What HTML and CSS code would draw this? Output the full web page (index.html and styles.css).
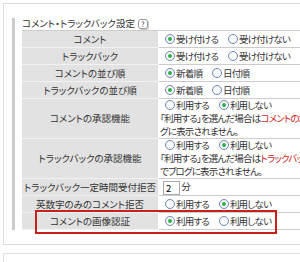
FILE: index.html
```html
<!DOCTYPE html>
<html lang="ja">
<head>
    <meta charset="UTF-8">
    <title>コメント・トラックバック設定</title>
    <link rel="stylesheet" href="styles.css">
</head>
<body>
    <div class="panel">
        <div class="section">
            <div class="section-title">コメント・トラックバック設定 <span class="help">?</span></div>
            <table class="settings">
                <tr>
                    <th>コメント</th>
                    <td><span class="radio on"></span>受け付ける<span class="radio"></span>受け付けない</td>
                </tr>
                <tr>
                    <th>トラックバック</th>
                    <td><span class="radio on"></span>受け付ける<span class="radio"></span>受け付けない</td>
                </tr>
                <tr>
                    <th>コメントの並び順</th>
                    <td><span class="radio on"></span>新着順<span class="radio"></span>日付順</td>
                </tr>
                <tr>
                    <th>トラックバックの並び順</th>
                    <td><span class="radio on"></span>新着順<span class="radio"></span>日付順</td>
                </tr>
                <tr class="tall">
                    <th>コメントの承認機能</th>
                    <td>
                        <span class="radio"></span>利用する<span class="radio on"></span>利用しない<br>
                        「利用する」を選んだ場合は<span class="warn">コメントの承認</span>を行うまでブロ<br>グに表示されません。
                    </td>
                </tr>
                <tr class="tall">
                    <th>トラックバックの承認機能</th>
                    <td>
                        <span class="radio"></span>利用する<span class="radio on"></span>利用しない<br>
                        「利用する」を選んだ場合は<span class="warn">トラックバックの承認</span>を行うま<br>でブログに表示されません。
                    </td>
                </tr>
                <tr>
                    <th>トラックバック一定時間受付拒否</th>
                    <td><input class="minutes" type="text" value="2"> 分</td>
                </tr>
                <tr>
                    <th>英数字のみのコメント拒否</th>
                    <td><span class="radio"></span>利用する<span class="radio on"></span>利用しない</td>
                </tr>
                <tr>
                    <th>コメントの画像認証</th>
                    <td><span class="radio on"></span>利用する<span class="radio"></span>利用しない</td>
                </tr>
            </table>
            <div class="highlight"></div>
        </div>
    </div>
    <div class="panel next"></div>
</body>
</html>
```

FILE: styles.css
```css
body {
    margin: 0;
    overflow: hidden;
    background: #fff;
    font-family: 'Noto Sans CJK JP', sans-serif;
    font-feature-settings: "palt";
    font-size: 9.5px;
    color: #333;
}

.panel {
    margin: 3px 0 0 3px;
    width: 420px;
    border: 1px solid #ddd;
    padding: 14px 0 14px 8px;
}

.panel.next {
    margin-top: 8px;
    height: 20px;
    padding: 0;
}

.section {
    position: relative;
    border-left: 3px solid #ccc;
    padding-left: 7px;
}

.section-title {
    line-height: 11px;
    margin-bottom: 1px;
}

.help {
    display: inline-block;
    width: 8px;
    height: 8px;
    margin-left: 1px;
    border: 1px solid #999;
    border-radius: 3px;
    box-shadow: 1px 1px 0 #ccc;
    font-size: 7px;
    line-height: 8px;
    text-align: center;
    vertical-align: middle;
}

.settings {
    table-layout: fixed;
    border-collapse: separate;
    border-spacing: 0;
    border-top: 1px solid #ccc;
    width: 400px;
}

.settings th,
.settings td {
    height: 16px;
    padding: 0;
    border-bottom: 1px solid #ccc;
    font-weight: normal;
    line-height: 13px;
    white-space: nowrap;
}

.settings th {
    width: 136px;
    background: #e2e2e2;
    border-right: 1px solid #fff;
    border-bottom-color: #f2f2f2;
    text-align: center;
}

.settings td {
    padding-left: 1px;
    text-align: left;
    letter-spacing: -0.8px;
}

.settings tr.tall td {
    height: 39px;
}

.radio {
    display: inline-block;
    box-sizing: border-box;
    width: 10px;
    height: 10px;
    margin: 0 1px 0 5px;
    border: 1px solid #6f89ad;
    border-radius: 50%;
    background: #f7f9fb;
    vertical-align: -1px;
    position: relative;
}

.radio ~ .radio {
    margin-left: 10px;
}

.radio.on::after {
    content: "";
    position: absolute;
    left: 2px;
    top: 2px;
    width: 4px;
    height: 4px;
    border-radius: 50%;
    background: #2fb24a;
}

.warn {
    color: #cc1f1f;
}

.minutes {
    box-sizing: border-box;
    width: 17px;
    height: 14px;
    margin: 0 0 0 3px;
    padding: 0 2px;
    border: 1px solid #aaa;
    font: inherit;
    vertical-align: middle;
}

.highlight {
    position: absolute;
    left: 20px;
    bottom: -4px;
    width: 238px;
    height: 20px;
    border: 2px solid #c8201a;
}
```
